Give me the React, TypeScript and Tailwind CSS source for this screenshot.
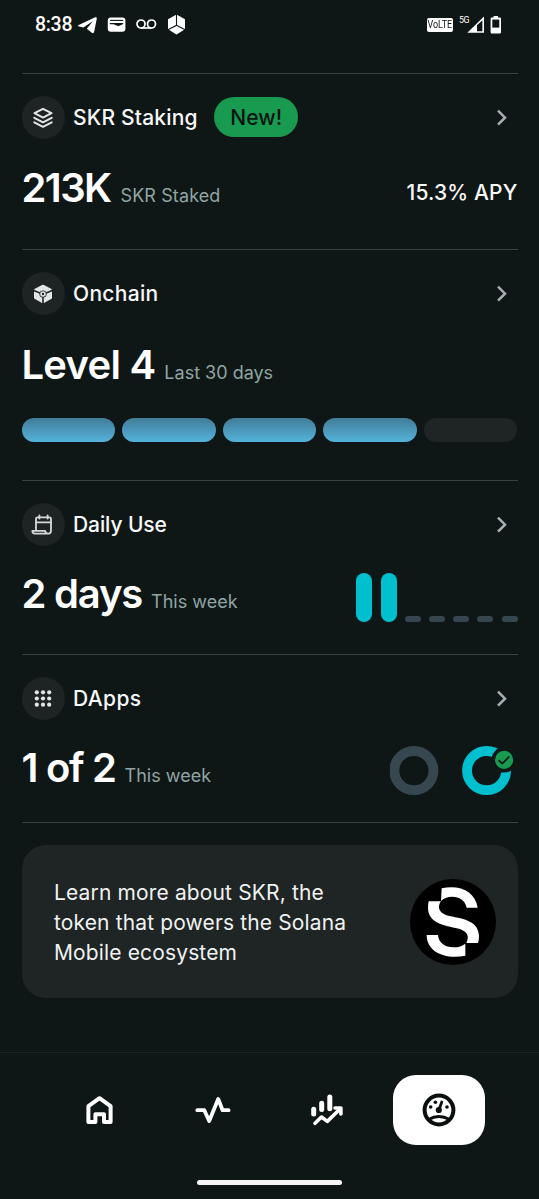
import React from "react";

function Chevron() {
  return (
    <svg className="mr-[10px] h-[18px] w-[12px]" viewBox="0 0 12 18" fill="none" stroke="#a3b1b5" strokeWidth="2.5">
      <path d="M2 1.7 L9 8.7 L2 15.7" />
    </svg>
  );
}

function LayersIcon() {
  return (
    <svg className="size-[22px]" viewBox="0 0 22 22" fill="none" stroke="#e3e6e6" strokeWidth="2" strokeLinejoin="round" strokeLinecap="round">
      <path d="M11 1.8 L19.5 6.2 L11 10.6 L2.5 6.2 Z" />
      <path d="M2.3 10.8 L11 15.3 L19.7 10.8" />
      <path d="M2.3 15.3 L11 19.8 L19.7 15.3" />
    </svg>
  );
}

function CubeIcon() {
  return (
    <svg className="size-[22px]" viewBox="0 0 22 22">
      <path d="M10 2 Q11 1.5 12 2 L19.1 5.8 Q20 6.3 20 7.3 V14.6 Q20 15.6 19.1 16.1 L12 19.9 Q11 20.4 10 19.9 L2.9 16.1 Q2 15.6 2 14.6 V7.3 Q2 6.3 2.9 5.8 Z" fill="#e3e6e6" />
      <path d="M1 7.2 L11 11.2 L21 7.2 M11 11 V21" stroke="#1e2323" strokeWidth="1.6" fill="none" />
      <circle cx="11" cy="11" r="3.6" fill="#1e2323" />
      <circle cx="11" cy="11" r="2" fill="none" stroke="#e3e6e6" strokeWidth="1.6" />
    </svg>
  );
}

function CalendarIcon() {
  return (
    <svg className="mr-[3px] size-[22px]" viewBox="0 0 22 22" fill="none" stroke="#d5d9d9" strokeWidth="1.8" strokeLinecap="round" strokeLinejoin="round">
      <path d="M5 15.8 V5 Q5 3.4 6.6 3.4 H18.4 Q20 3.4 20 5 V16.8 Q20 19.6 17.4 19.6 H4 Q1.3 19.6 1.3 16.8 H14.2 Q14.2 19.6 17 19.6" />
      <path d="M5 8.4 H20 M8.4 1.4 V4.5 M16.6 1.4 V4.5" />
    </svg>
  );
}

function DotsIcon() {
  return (
    <svg className="size-[22px]" viewBox="0 0 22 22" fill="#e3e6e6">
      {[4.3, 10.5, 16.7].map((y) => [4.8, 11, 17.2].map((x) => <circle key={`${x}-${y}`} cx={x} cy={y} r="2.1" />))}
    </svg>
  );
}

function Header({ icon, title, badge }: { icon: React.ReactNode; title: React.ReactNode; badge?: string }) {
  return (
    <div className="flex h-[43px] items-center">
      <div className="flex size-[43px] shrink-0 items-center justify-center rounded-full bg-[#1e2323]">{icon}</div>
      <div className="ml-[8.5px] whitespace-nowrap text-[21px] font-medium leading-none text-[#f7f9f9]">{title}</div>
      {badge && (
        <div className="-mt-px ml-[16.5px] flex h-[40px] w-[84px] items-center justify-center rounded-full bg-[#189a50] pt-px text-[21px] font-medium tracking-[0.1px] text-[#081410]">
          {badge}
        </div>
      )}
      <div className="ml-auto">
        <Chevron />
      </div>
    </div>
  );
}

function Metric({ value, note }: { value: React.ReactNode; note: React.ReactNode }) {
  return (
    <div className="flex items-baseline whitespace-nowrap text-[40px] leading-none font-semibold text-white">
      {value}
      {note}
    </div>
  );
}

function StatusBar() {
  return (
    <div className="flex h-[73px] items-start pt-[12px] text-white">
      <div className="ml-[35px] w-[42px] font-['Roboto'] text-[19.5px] font-medium leading-[26px] tracking-[-0.3px]">8:38</div>
      <svg className="mt-[4px] size-[20px]" viewBox="0 0 20 20" fill="white">
        <path d="M1.2 9.2 L18.2 1.3 Q20 .7 19.8 2.4 L17.2 15.7 Q16.7 18 14.8 16.7 L9.8 12.7 L15.8 5.3 L6.3 11.6 L1.3 10.2 Q.5 9.7 1.2 9.2 Z" />
      </svg>
      <svg className="ml-[10px] mt-[5px] h-[16px] w-[19px]" viewBox="0 0 19 16">
        <rect x=".8" y=".6" width="17.6" height="14.2" rx="3" fill="white" />
        <path d="M3 3.4 H16.2" stroke="#0f1716" strokeWidth="1.1" />
        <path d="M2.8 6 H16.2 V7 L12.4 8.8 Q11 9.3 9.5 8.6 L6.5 7.3 H2.8 Z" fill="#0f1716" />
      </svg>
      <svg className="ml-[10px] mt-[6px] h-[12px] w-[21px]" viewBox="0 0 21 12" fill="none" stroke="white" strokeWidth="1.7">
        <circle cx="5" cy="6" r="4" />
        <circle cx="15.5" cy="6" r="4" />
        <path d="M5 10 H15.5" />
      </svg>
      <svg className="ml-[9.5px] mt-[2px] h-[21px] w-[19px]" viewBox="0 0 19 21">
        <path d="M9.5 .5 L18 5.3 V15.3 L9.5 20.4 L1 15.3 V5.3 Z" fill="white" />
        <path d="M9.5 0 V11.3 L1 15.8 M9.5 11.3 L18 15.8" stroke="#0f1716" strokeWidth="1.1" fill="none" transform="rotate(0)" />
      </svg>
      <div className="ml-auto mt-[6px] flex h-[14px] w-[26px] items-center justify-center rounded-[2px] bg-white">
        <span className="origin-center scale-x-[0.78] font-['Roboto'] text-[11.5px] leading-none text-[#0f1716]">VoLTE</span>
      </div>
      <div className="ml-[6px] mt-[4px] w-[8px] whitespace-nowrap font-['Roboto'] text-[8.8px] leading-[9px] tracking-[-0.4px]">5G</div>
      <svg className="mt-[4px] h-[17px] w-[18px]" viewBox="0 0 18 17">
        <path d="M.3 16.8 L17 .5 V16.8 Z" fill="white" />
        <path d="M10 9.3 L15.4 4.2 V15.2 H10 Z" fill="#0f1716" />
      </svg>
      <svg className="ml-[5px] mr-[37px] mt-[4px] h-[18px] w-[12px]" viewBox="0 0 12 18">
        <path d="M1.8 1.6 H3.6 V0 H8 V1.6 H9.8 Q11 1.6 11 2.8 V16.2 Q11 17.4 9.8 17.4 H1.8 Q.6 17.4 .6 16.2 V2.8 Q.6 1.6 1.8 1.6 Z" fill="white" />
        <rect x="2.3" y="3.6" width="7" height="8" fill="#0f1716" />
      </svg>
    </div>
  );
}

function Rings() {
  return (
    <svg className="-mt-[2px] h-[50px] w-[128px]" viewBox="0 0 128 50" fill="none">
      <defs>
        <mask id="notch" maskUnits="userSpaceOnUse" x="0" y="0" width="128" height="50">
          <rect width="128" height="50" fill="white" />
          <circle cx="114.1" cy="13.9" r="12.7" fill="black" />
        </mask>
      </defs>
      <circle cx="23.9" cy="24.6" r="19.6" stroke="#364750" strokeWidth="9.8" />
      <circle cx="96.6" cy="24.6" r="19.6" stroke="#00bfce" strokeWidth="9.8" mask="url(#notch)" />
      <circle cx="114.1" cy="13.9" r="9.1" fill="#189a50" />
      <path d="M108.6 14.2 L112.3 17.6 L119.4 10.3" stroke="#0a1a14" strokeWidth="1.7" />
    </svg>
  );
}

function SkrLogo() {
  return (
    <svg className="h-[86px] w-[86px]" viewBox="120 115 258 258">
      <circle cx="249" cy="244" r="129" fill="black" />
      <g fill="white">
        <path d="M215 143 C270 131 316 153 323 201 H290 C285 178 268 168 247 168 C232 168 221 173 213 181 Z" />
        <path d="M176 182 H213 C202 196 204 219 238 226 C286 235 325 243 327 285 Q327 297 324 307 H289 C299 286 294 270 257 262 C213 252 174 243 174 201 Q174 190 176 182 Z" />
        <path d="M170 283 H204 C206 306 224 320 251 320 Q273 320 286 309 V345 C226 358 170 334 170 283 Z" />
      </g>
    </svg>
  );
}

const noteClass = "font-normal text-[#8fa5a4] text-[18px]";

export default function App() {
  return (
    <div className="flex h-[1199px] w-[539px] flex-col overflow-hidden bg-[#0f1716] font-['Inter',sans-serif]">
      <StatusBar />
      <main className="flex flex-col pl-[21.5px] pr-[21.5px]">
        <section className="h-[176px] border-t border-[#3a4241] pt-[22px]">
          <Header icon={<LayersIcon />} title={<span className="tracking-[0.2px]">SKR Staking</span>} badge="New!" />
          <div className="mt-[29px] flex items-start justify-between">
            <Metric value={<span className="tracking-[-1.6px]">213K</span>} note={<span className={`ml-[10px] tracking-[0.1px] ${noteClass}`}>SKR Staked</span>} />
            <span className="mt-[14px] text-[21px] font-medium leading-none tracking-[0.15px] text-[#f7f9f9]">15.3% APY</span>
          </div>
        </section>
        <section className="h-[231px] border-t border-[#3a4241] pt-[22px]">
          <Header icon={<CubeIcon />} title={<span className="tracking-[0.3px]">Onchain</span>} />
          <div className="mt-[30px]">
            <Metric value={<span className="tracking-[-0.75px]">Level 4</span>} note={<span className={`ml-[9px] ${noteClass}`}>Last 30 days</span>} />
          </div>
          <div className="mt-[33px] flex gap-[7px]">
            {[0, 1, 2, 3].map((i) => (
              <div key={i} className="h-[24px] flex-1 rounded-full bg-linear-to-b from-[#417d98] to-[#55b3dc]" />
            ))}
            <div className="h-[24px] flex-1 rounded-full bg-[#1f2424]" />
          </div>
        </section>
        <section className="h-[174px] border-t border-[#3a4241] pt-[22px]">
          <Header icon={<CalendarIcon />} title={<span className="tracking-[-0.1px]">Daily Use</span>} />
          <div className="mt-[28px] flex justify-between">
            <Metric value={<span className="tracking-[-1.2px]">2 days</span>} note={<span className={`ml-[9px] ${noteClass}`}>This week</span>} />
            <div className="-mt-px flex h-[48.5px] items-end gap-[8.2px]">
              <div className="h-full w-[16px] rounded-full bg-[#00bfce]" />
              <div className="h-full w-[16px] rounded-full bg-[#00bfce]" />
              {[0, 1, 2, 3, 4].map((i) => (
                <div key={i} className="h-[6px] w-[16px] rounded-full bg-[#364750]" />
              ))}
            </div>
          </div>
        </section>
        <section className="h-[168px] border-t border-[#3a4241] pt-[22px]">
          <Header icon={<DotsIcon />} title={<span className="tracking-[0.4px]">DApps</span>} />
          <div className="mt-[28px] flex justify-between">
            <Metric value={<span className="tracking-[-1.3px]">1 of 2</span>} note={<span className={`ml-[9px] ${noteClass}`}>This week</span>} />
            <Rings />
          </div>
        </section>
        <div className="border-t border-[#3a4241] pt-[22px]">
          <div className="flex h-[153px] items-center justify-between rounded-[24px] bg-[#1f2424] pl-[32.5px] pr-[22px]">
            <p className="whitespace-nowrap pt-[3px] text-[21px] leading-[30px] tracking-[0.14px] text-[#eff2f2]">
              <span className="block">Learn more about SKR, the</span>
              <span className="block">token that powers the Solana</span>
              <span className="block">Mobile ecosystem</span>
            </p>
            <SkrLogo />
          </div>
        </div>
      </main>
      <nav className="mt-auto flex h-[147px] flex-col border-t border-[#1c2423]">
        <div className="mt-[22px] flex h-[70px] items-center pl-[54px]">
          <div className="flex w-[91px] justify-center">
            <svg className="size-[32px]" viewBox="0 0 32 32" fill="none" stroke="white" strokeWidth="4" strokeLinejoin="round" strokeLinecap="round">
              <path d="M15.5 4.2 L26.6 12.2 V28 H20 V20.3 H11.4 V28 H4.4 V12.2 Z" />
            </svg>
          </div>
          <div className="ml-[22px] flex w-[91px] justify-center">
            <svg className="h-[32px] w-[36px]" viewBox="0 0 36 32" fill="none" stroke="white" strokeWidth="3.8" strokeLinejoin="round" strokeLinecap="round">
              <path d="M2.3 16.2 H9.3 L14.2 27 L23.2 5 L27.6 16.2 H33.6" />
            </svg>
          </div>
          <div className="ml-[22px] flex w-[91px] justify-center">
            <svg className="h-[34px] w-[34px]" viewBox="0 0 34 34" fill="none" stroke="white" strokeLinejoin="round" strokeLinecap="round">
              <path d="M4.7 16.2 V21 M12.7 10.2 V16.5 M20.8 4 V15.8" strokeWidth="5" />
              <path d="M6 30.3 L12.5 24 L18.3 28.4 L30.5 16.5" strokeWidth="3.6" />
              <path d="M26 15 H31.9 V21" strokeWidth="3.6" />
            </svg>
          </div>
          <div className="ml-[22px] flex h-[70px] w-[92px] items-center justify-center rounded-[23px] bg-white">
            <svg className="size-[34px]" viewBox="0 0 34 34" fill="none" stroke="#0b0f0f">
              <circle cx="17" cy="17" r="14.4" strokeWidth="4" />
              <path d="M6.5 26.5 Q17 20.5 27.5 26.5" strokeWidth="3" />
              <path d="M16.8 17.2 L19.8 9" strokeWidth="2.8" strokeLinecap="round" />
              <circle cx="16.8" cy="17" r="3.1" fill="#0b0f0f" stroke="none" />
              <g fill="#0b0f0f" stroke="none">
                <circle cx="8.7" cy="14" r="1.8" />
                <circle cx="13.4" cy="9.2" r="1.8" />
                <circle cx="25" cy="14" r="1.8" />
              </g>
            </svg>
          </div>
        </div>
        <div className="mx-auto mt-[35px] h-[5px] w-[145px] rounded-full bg-[#f5f5f5]" />
      </nav>
    </div>
  );
}
